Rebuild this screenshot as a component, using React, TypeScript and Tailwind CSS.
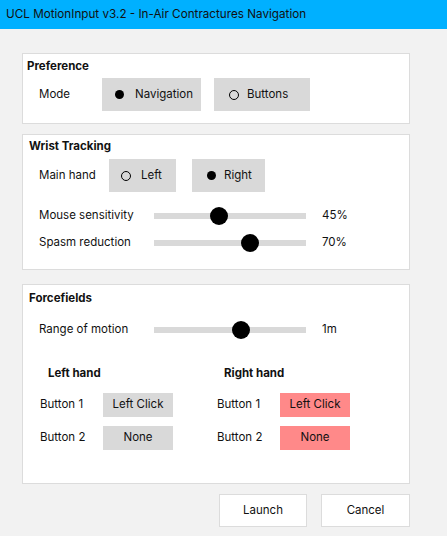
const Radio = ({ on }: { on: boolean }) =>
  on ? (
    <span className="h-[9px] w-[9px] shrink-0 rounded-full bg-black" />
  ) : (
    <span className="h-[10px] w-[10px] shrink-0 rounded-full border border-black" />
  )

const Slider = ({ label, pct, value }: { label: string; pct: number; value: string }) => (
  <div className="flex h-[20px] items-center">
    <span className="w-[115px] shrink-0">{label}</span>
    <div className="relative h-[6px] w-[152px] bg-[#d9d9d9]">
      <span
        className="absolute top-1/2 h-[18px] w-[18px] -translate-x-1/2 -translate-y-1/2 rounded-full bg-black"
        style={{ left: `${pct}%` }}
      />
    </div>
    <span className="ml-[16px]">{value}</span>
  </div>
)

const Mapping = ({ label, value, red }: { label: string; value: string; red?: boolean }) => (
  <div className="flex items-center">
    <span className="w-[63px] shrink-0">{label}</span>
    <span
      className={`flex h-[24px] w-[70px] items-center justify-center ${red ? 'bg-[#ff8989]' : 'bg-[#d9d9d9]'}`}
    >
      {value}
    </span>
  </div>
)

const App = () => {
  return (
    <div className="flex h-[536px] w-[447px] flex-col bg-[#f2f2f2] font-['Inter',sans-serif] text-[11.5px] text-[#111]">
      <div className="flex h-[29px] items-center bg-[#00b0ff] pl-[6px] text-[11.7px]">
        UCL MotionInput v3.2 - In-Air Contractures Navigation
      </div>

      <div className="ml-[22px] mt-[24px] w-[388px] border border-[#dcdcdc] bg-white pb-[12px] pt-[5px]">
        <div className="flex h-[16px] items-center pl-[4px] font-bold">Preference</div>
        <div className="mt-[3px] flex items-center pl-[16px]">
          <span className="w-[63px] pt-[1px]">Mode</span>
          <div className="flex h-[33px] w-[99px] items-center gap-[11px] bg-[#d9d9d9] pl-[13px]">
            <Radio on />
            <span>Navigation</span>
          </div>
          <div className="ml-[13px] flex h-[33px] w-[96px] items-center gap-[8px] bg-[#d9d9d9] pl-[15px]">
            <Radio on={false} />
            <span>Buttons</span>
          </div>
        </div>
      </div>

      <div className="ml-[22px] mt-[10px] w-[388px] border border-[#dcdcdc] bg-white pb-[16px] pt-[4px]">
        <div className="flex h-[16px] items-center pl-[6px] font-bold">Wrist Tracking</div>
        <div className="mt-[4px] flex items-center pl-[16px]">
          <span className="w-[70px]">Main hand</span>
          <div className="flex h-[33px] w-[67px] items-center gap-[10px] bg-[#d9d9d9] pl-[12px]">
            <Radio on={false} />
            <span>Left</span>
          </div>
          <div className="ml-[16px] flex h-[33px] w-[73px] items-center gap-[8px] bg-[#d9d9d9] pl-[15px]">
            <Radio on />
            <span>Right</span>
          </div>
        </div>
        <div className="mt-[14px] flex flex-col gap-[7px] pl-[16px]">
          <Slider label="Mouse sensitivity" pct={43} value="45%" />
          <Slider label="Spasm reduction" pct={63} value="70%" />
        </div>
      </div>

      <div className="ml-[22px] mt-[14px] h-[200px] w-[388px] border border-[#dcdcdc] bg-white pt-[6px]">
        <div className="flex h-[16px] items-center pl-[6px] font-bold">Forcefields</div>
        <div className="mt-[13px] pl-[16px]">
          <Slider label="Range of motion" pct={57} value="1m" />
        </div>
        <div className="mt-[26px] flex">
          <div className="flex w-[194px] flex-col pl-[17px]">
            <div className="flex h-[16px] items-center pl-[8px] font-bold">Left hand</div>
            <div className="mt-[11px] flex flex-col gap-[9px]">
              <Mapping label="Button 1" value="Left Click" />
              <Mapping label="Button 2" value="None" />
            </div>
          </div>
          <div className="flex flex-col">
            <div className="flex h-[16px] items-center pl-[7px] font-bold">Right hand</div>
            <div className="mt-[11px] flex flex-col gap-[9px]">
              <Mapping label="Button 1" value="Left Click" red />
              <Mapping label="Button 2" value="None" red />
            </div>
          </div>
        </div>
      </div>

      <div className="ml-[219px] mt-[10px] flex gap-[14px]">
        <button className="h-[33px] w-[88px] border border-[#dcdcdc] bg-white">Launch</button>
        <button className="h-[33px] w-[89px] border border-[#dcdcdc] bg-white">Cancel</button>
      </div>
    </div>
  )
}

export default App
